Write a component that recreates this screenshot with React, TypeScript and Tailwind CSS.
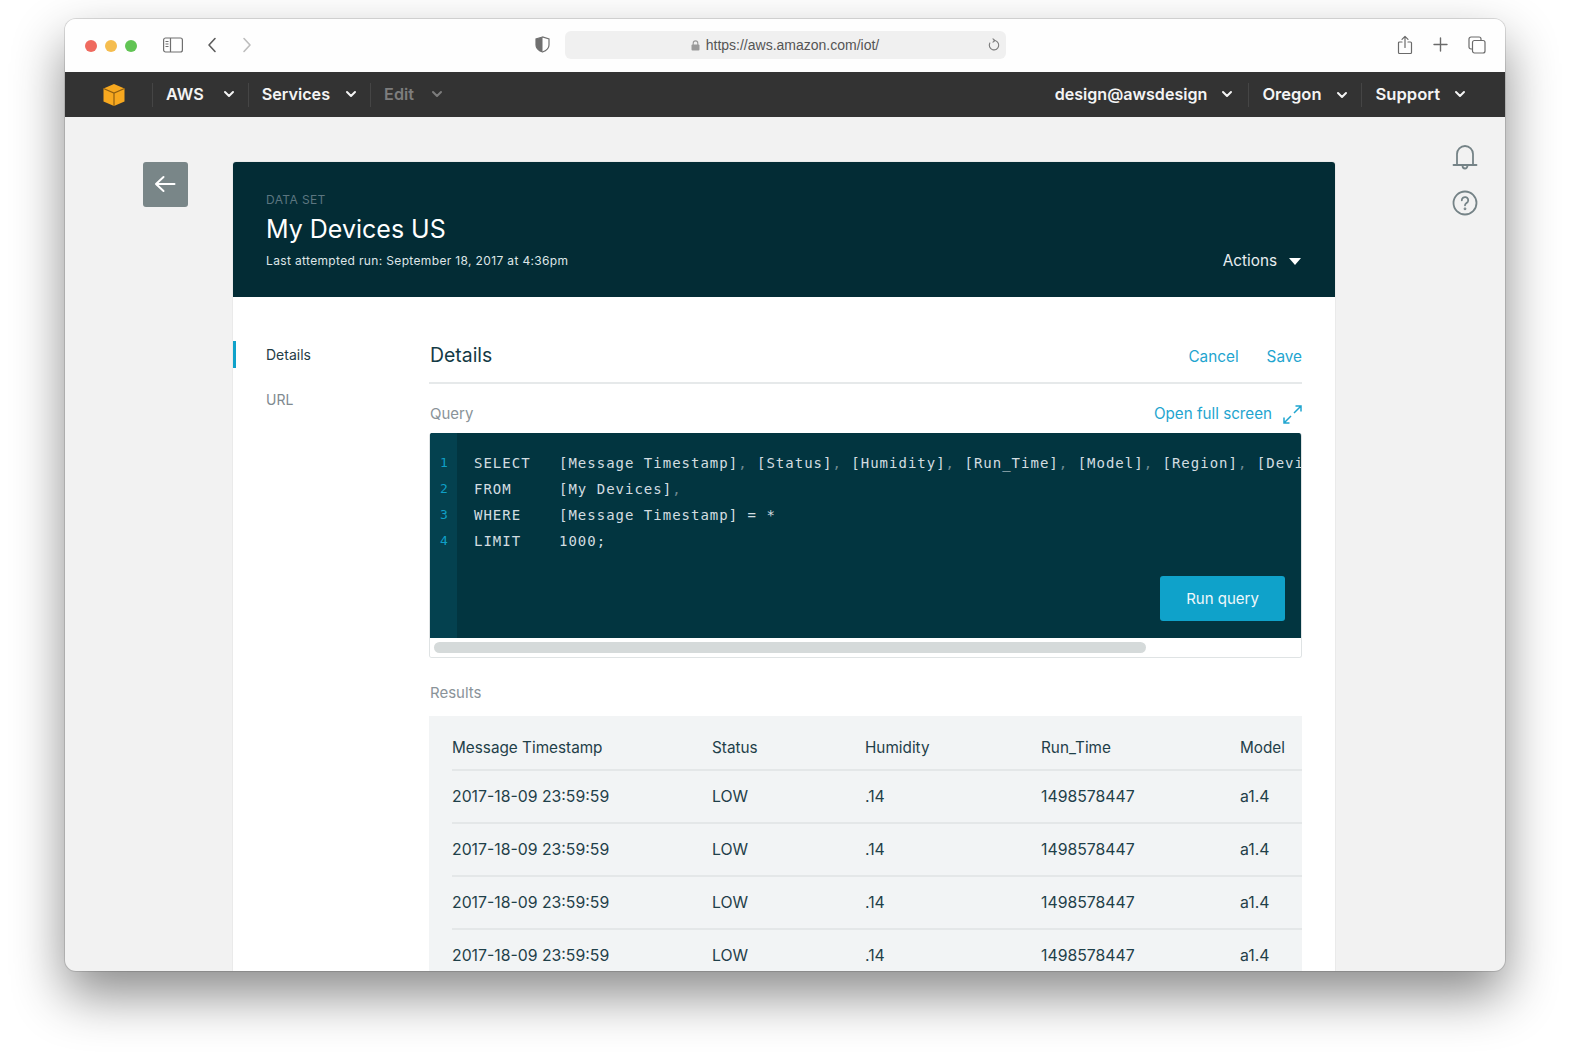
import React from "react";

const Chevron = ({ c = "#ffffff" }: { c?: string }) => (
  <svg width="12" height="8" viewBox="0 0 12 8" fill="none">
    <path d="M2 2l4 4 4-4" stroke={c} strokeWidth="2" strokeLinecap="round" strokeLinejoin="round" />
  </svg>
);

const NavItem = ({ label, dim, gap, size = "text-[16.2px]" }: { label: string; dim?: boolean; gap: string; size?: string }) => (
  <div className="flex h-[45px] items-center">
    <div className="h-6 w-px bg-[#454545]" />
    <div className={`flex items-center pl-[13px] pr-[13px] ${gap}`}>
      <span className={`${size} font-semibold ${dim ? "text-[#7d7d7d]" : "text-[#f4f4f4]"}`}>{label}</span>
      <Chevron c={dim ? "#7d7d7d" : "#f4f4f4"} />
    </div>
  </div>
);

const rows = [0, 1, 2, 3];
const gridCols = "grid grid-cols-[260px_153px_176px_199px_1fr] items-center";
const selected = ["[Message Timestamp]", "[Status]", "[Humidity]", "[Run_Time]", "[Model]", "[Region]", "[Device]"];

export default function App() {
  return (
    <div className="h-[1056px] w-[1570px] overflow-hidden bg-white pl-[65px] pt-[19px] font-['Inter',sans-serif]">
      <div className="flex h-[952px] w-[1440px] flex-col overflow-hidden rounded-[11px] bg-[#f2f2f2] shadow-[0_0_0_1px_rgba(0,0,0,0.12),0_24px_52px_rgba(0,0,0,0.46)]">
        {/* Browser chrome */}
        <div className="flex h-[53px] shrink-0 items-center bg-[#fefefe] pl-5">
          <div className="flex gap-2">
            <div className="h-3 w-3 rounded-full bg-[#ef6a5f]" />
            <div className="h-3 w-3 rounded-full bg-[#f5bd4f]" />
            <div className="h-3 w-3 rounded-full bg-[#61c454]" />
          </div>
          <svg className="mb-[2px] ml-[26px]" width="20" height="16" viewBox="0 0 20 16" fill="none" stroke="#6f6f6f" strokeWidth="1.2">
            <rect x="0.6" y="1" width="18.8" height="14" rx="2" />
            <path d="M7.5 1v14" />
            <path d="M2.5 4.5h3M2.5 7h3M2.5 9.5h3" strokeWidth="1" />
          </svg>
          <svg className="mb-[2px] ml-[23px]" width="12" height="16" viewBox="0 0 12 16" fill="none" stroke="#5c5c5c" strokeWidth="1.6" strokeLinecap="round" strokeLinejoin="round">
            <path d="M9 1.5L3 8l6 6.5" />
          </svg>
          <svg className="mb-[2px] ml-[23px]" width="12" height="16" viewBox="0 0 12 16" fill="none" stroke="#bdbdbd" strokeWidth="1.6" strokeLinecap="round" strokeLinejoin="round">
            <path d="M3 1.5L9 8l-6 6.5" />
          </svg>
          <svg className="mb-[2px] ml-[282px]" width="15" height="17" viewBox="0 0 15 17">
            <path d="M7.5 1L1 3v6c0 3.5 3 5.8 6.5 7 3.5-1.2 6.5-3.5 6.5-7V3z" fill="#fff" stroke="#707070" strokeWidth="1.2" />
            <path d="M7.5 1L1 3v6c0 3.5 3 5.8 6.5 7z" fill="#707070" />
          </svg>
          <div className="mb-[2px] ml-[15px] flex h-7 w-[441px] items-center rounded-[6px] bg-[#f0f0f0]">
            <div className="flex flex-1 items-center justify-center gap-[6px] pl-[18px] pt-[2px]">
              <svg width="9" height="11" viewBox="0 0 9 11">
                <rect x="0.5" y="4.5" width="8" height="6" rx="1" fill="#9a9a9a" />
                <path d="M2.2 5V3.2a2.3 2.3 0 014.6 0V5" fill="none" stroke="#9a9a9a" strokeWidth="1.1" />
              </svg>
              <span className="font-['Liberation_Sans',sans-serif] text-[14px] text-[#555555]">https://aws.amazon.com/iot/</span>
            </div>
            <svg className="mr-[5px]" width="14" height="14" viewBox="0 0 14 14" fill="none" stroke="#7a7a7a" strokeWidth="1.1" strokeLinecap="round">
              <path d="M7 2.5a4.7 4.7 0 11-4.2 2.6" />
              <path d="M6 0.8L8 2.5 6 4.2" />
            </svg>
          </div>
          <svg className="mb-[2px] ml-[391px]" width="16" height="20" viewBox="0 0 16 20" fill="none" stroke="#6a6a6a" strokeWidth="1.2" strokeLinecap="round" strokeLinejoin="round">
            <path d="M5 7H2.5a1 1 0 00-1 1v9.5a1 1 0 001 1h11a1 1 0 001-1V8a1 1 0 00-1-1H11" />
            <path d="M8 12.5V1.5M5 4.3L8 1.3l3 3" />
          </svg>
          <svg className="mb-[2px] ml-[20px]" width="15" height="15" viewBox="0 0 15 15" stroke="#6a6a6a" strokeWidth="1.4" strokeLinecap="round">
            <path d="M7.5 1v13M1 7.5h13" />
          </svg>
          <svg className="mb-[2px] ml-[20px]" width="18" height="18" viewBox="0 0 18 18" fill="none" stroke="#6a6a6a" strokeWidth="1.2">
            <path d="M4 13H3a2 2 0 01-2-2V3a2 2 0 012-2h8a2 2 0 012 2v1" />
            <rect x="4.5" y="4.5" width="12.5" height="12.5" rx="2" />
          </svg>
        </div>

        {/* AWS nav */}
        <div className="flex h-[45px] shrink-0 items-center justify-between bg-[#333333] pr-[26px]">
          <div className="flex items-center">
            <svg className="ml-[37px] mr-[26px]" width="24" height="24" viewBox="0 0 24 24">
              <path d="M12 1L1.5 5.500v13L12 23l10.500-4.500v-13z" fill="#f7a81f" />
              <path d="M1.500 5.500L12 10l10.500-4.500M12 10v13" fill="none" stroke="#8f5f12" strokeWidth="1.2" />
            </svg>
            <NavItem label="AWS" gap="gap-[19px]" />
            <NavItem label="Services" gap="gap-[15px]" />
            <NavItem label="Edit" dim gap="gap-[17px]" />
          </div>
          <div className="flex items-center">
            <div className="flex items-center gap-[14px] pr-[15px]">
              <span className="text-[16.1px] font-semibold text-[#f4f4f4]">design@awsdesign</span>
              <Chevron c="#f4f4f4" />
            </div>
            <NavItem label="Oregon" size="text-[16.5px]" gap="gap-[15px]" />
            <NavItem label="Support" size="text-[16.6px]" gap="gap-[14px]" />
          </div>
        </div>

        {/* Page */}
        <div className="flex min-h-0 flex-1 items-start pl-[78px] pt-[29px]">
          <div className="mt-4 flex h-[45px] w-[45px] shrink-0 items-center justify-center rounded-[3px] bg-[#798688]">
            <svg className="mb-px mr-px" width="22" height="18" viewBox="0 0 22 18" fill="none" stroke="#ffffff" strokeWidth="2" strokeLinecap="round" strokeLinejoin="round">
              <path d="M20.500 9H2M9.500 2L2 9l7.500 7" />
            </svg>
          </div>

          <div className="ml-[45px] mt-4 w-[1102px] shrink-0 rounded-t-[3px] bg-white shadow-[0_0_0_1px_rgba(0,0,0,0.03)]">
            <div className="relative flex h-[135px] flex-col rounded-t-[3px] bg-[#032c35] pl-[33px] pt-[30px]">
              <div className="text-[12px] leading-[15px] tracking-[0.4px] text-[#5c7680]">DATA SET</div>
              <div className="mt-[4px] text-[25px] leading-[36px] text-white">My Devices US</div>
              <div className="mt-[5px] text-[12px] leading-[18px] tracking-[0.35px] text-[#dfe6e8]">Last attempted run: September 18, 2017 at 4:36pm</div>
              <div className="absolute bottom-[26px] right-[34px] flex items-center gap-3">
                <span className="text-[15.3px] leading-5 text-[#e8eef0]">Actions</span>
                <svg width="12" height="7" viewBox="0 0 12 7"><path d="M0 0h12L6 7z" fill="#ffffff" /></svg>
              </div>
            </div>

            <div className="flex">
              <div className="w-[196px] shrink-0 pt-[44px]">
                <div className="flex h-[27px] items-center border-l-[3px] border-[#0fa2ca] pl-[30px] text-[14px] text-[#1f3c46]">Details</div>
                <div className="mt-[18px] flex h-[27px] items-center pl-[33px] text-[14px] text-[#7f8a90]">URL</div>
              </div>

              <div className="w-[873px] shrink-0 pt-[44px]">
                <div className="flex h-[43px] items-start justify-between border-b-2 border-[#e6e9ea]">
                  <span className="pl-px pt-px text-[19.4px] leading-[26px] text-[#143a45]">Details</span>
                  <div className="flex gap-7 pt-[6px] text-[15.3px] leading-5 text-[#1fa5cf]">
                    <span>Cancel</span>
                    <span>Save</span>
                  </div>
                </div>

                <div className="mt-[20px] flex h-[20px] items-center justify-between">
                  <span className="pl-px text-[15px] leading-5 text-[#8a9399]">Query</span>
                  <div className="flex items-center gap-[11px]">
                    <span className="text-[15.2px] leading-5 text-[#1fa5cf]">Open full screen</span>
                    <svg width="19" height="19" viewBox="0 0 19 19" fill="none" stroke="#1fa5cf" strokeWidth="1.5">
                      <path d="M11 8l7-7M12.500 1H18v5.500M8 11l-7 7M1 12.500V18h5.500" />
                    </svg>
                  </div>
                </div>

                {/* Editor */}
                <div className="mt-[9px] overflow-hidden rounded-[3px] border border-t-0 border-[#dfe3e4]">
                  <div className="relative -mx-px flex h-[205px] items-start overflow-hidden bg-[#023540]">
                    <div className="flex h-full w-[28px] shrink-0 flex-col items-center bg-[#04414f] pl-[2px] pt-[17px] font-['DejaVu_Sans_Mono',monospace] text-[13px] leading-[26px] text-[#0f9fc7]">
                      <div>1</div>
                      <div>2</div>
                      <div>3</div>
                      <div>4</div>
                    </div>
                    <div className="grid grid-cols-[85px_max-content] content-start whitespace-pre pl-[17px] pt-[17px] font-['DejaVu_Sans_Mono',monospace] text-[14px] leading-[26px] tracking-[1px] text-[#d3dde0]">
                      <span>SELECT</span>
                      <span>
                        {selected.map((s, i) => (
                          <React.Fragment key={s}>
                            {s}
                            {i < selected.length - 1 && <span className="text-[#6f8a92]">, </span>}
                          </React.Fragment>
                        ))}
                      </span>
                      <span>FROM</span>
                      <span>[My Devices]<span className="text-[#6f8a92]">,</span></span>
                      <span>WHERE</span>
                      <span>[Message Timestamp] = *</span>
                      <span>LIMIT</span>
                      <span>1000;</span>
                    </div>
                    <div className="absolute bottom-[17px] right-[17px] flex h-[45px] w-[125px] items-center justify-center rounded-[3px] bg-[#0fa2ca] pt-px text-[15px] text-[#eef8fb]">Run query</div>
                  </div>
                  <div className="flex h-[19px] items-center bg-white px-1">
                    <div className="h-[11px] w-[712px] rounded-full bg-[#d5dada]" />
                  </div>
                </div>

                <div className="mt-[25px] pl-px text-[15px] leading-5 text-[#8a9399]">Results</div>

                <div className="mt-[13px] bg-[#f2f4f5] pl-[23px] text-[#1f4049]">
                  <div className={`${gridCols} h-[55px] border-b-2 border-[#e4e7e8] pt-[12px] text-[15.3px]`}>
                    <span>Message Timestamp</span>
                    <span>Status</span>
                    <span>Humidity</span>
                    <span>Run_Time</span>
                    <span>Model</span>
                  </div>
                  {rows.map((r) => (
                    <div key={r} className={`${gridCols} h-[53px] border-b-2 border-[#e4e7e8] pt-px text-[15.8px]`}>
                      <span>2017-18-09 23:59:59</span>
                      <span>LOW</span>
                      <span>.14</span>
                      <span>1498578447</span>
                      <span>a1.4</span>
                    </div>
                  ))}
                </div>
              </div>
            </div>
          </div>

          <div className="-mt-[2px] ml-[117px] flex w-[26px] shrink-0 flex-col items-center gap-[19px]">
            <svg width="26" height="27" viewBox="0 0 26 27" fill="none" stroke="#758387" strokeWidth="1.8" strokeLinecap="round" strokeLinejoin="round">
              <path d="M5 20V10a8 8 0 0116 0v10" />
              <path d="M1.500 21h23" />
              <path d="M10.500 21.500a2.500 3 0 005 0" />
            </svg>
            <svg width="26" height="26" viewBox="0 0 26 26" fill="none" stroke="#758387" strokeWidth="1.8" strokeLinecap="round">
              <circle cx="13" cy="13" r="11.500" />
              <path d="M9.800 10.300a3.200 3.200 0 116 1.500c-.8 1.300-2.800 1.700-2.800 3.500" />
              <circle cx="13" cy="18.800" r="0.500" />
            </svg>
          </div>
        </div>
      </div>
    </div>
  );
}
